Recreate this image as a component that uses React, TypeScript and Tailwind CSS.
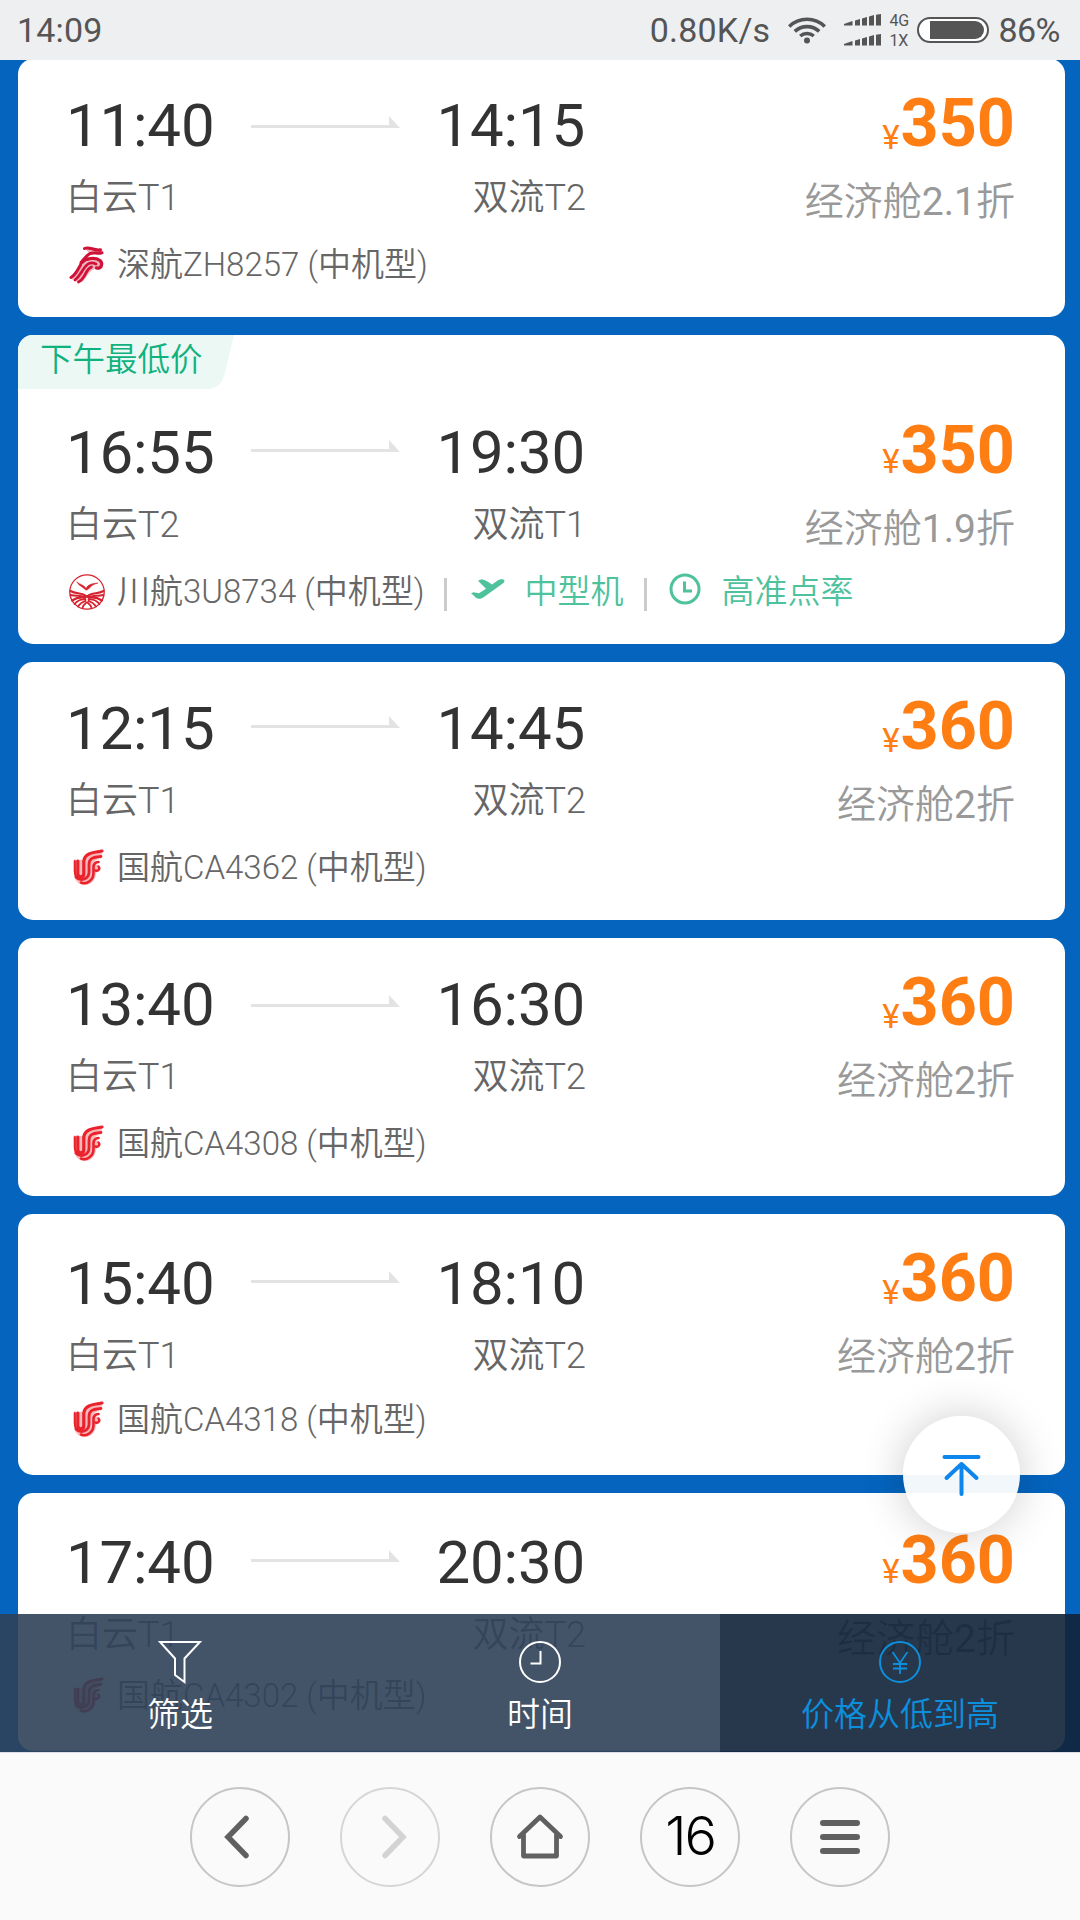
import React from 'react';

type Flight = {
  depart: string;
  arrive: string;
  from: string;
  to: string;
  airline: 'shenzhen' | 'sichuan' | 'airchina';
  flightNo: string;
  price: string;
  discount: string;
  tag?: string;
  features?: boolean;
  cardClass: string;
  timeClass: string;
  arrowClass: string;
  priceClass: string;
  infoClass: string;
};

const flights: Flight[] = [
  { depart: '11:40', arrive: '14:15', from: '白云T1', to: '双流T2', airline: 'shenzhen', flightNo: '深航ZH8257 (中机型)', price: '350', discount: '2.1', cardClass: 'h-[258px]', timeClass: 'mt-0', arrowClass: 'mt-[20px]', priceClass: 'mt-0', infoClass: 'mt-[28px]' },
  { depart: '16:55', arrive: '19:30', from: '白云T2', to: '双流T1', airline: 'sichuan', flightNo: '川航3U8734 (中机型)', price: '350', discount: '1.9', tag: '下午最低价', features: true, cardClass: 'h-[309px]', timeClass: 'mt-[3px]', arrowClass: 'mt-[20px]', priceClass: 'mt-[3px]', infoClass: 'mt-[31px]' },
  { depart: '12:15', arrive: '14:45', from: '白云T1', to: '双流T2', airline: 'airchina', flightNo: '国航CA4362 (中机型)', price: '360', discount: '2', cardClass: 'h-[258px]', timeClass: 'mt-0', arrowClass: 'mt-[17px]', priceClass: 'mt-0', infoClass: 'mt-[28px]' },
  { depart: '13:40', arrive: '16:30', from: '白云T1', to: '双流T2', airline: 'airchina', flightNo: '国航CA4308 (中机型)', price: '360', discount: '2', cardClass: 'h-[258px]', timeClass: 'mt-0', arrowClass: 'mt-[20px]', priceClass: 'mt-0', infoClass: 'mt-[28px]' },
  { depart: '15:40', arrive: '18:10', from: '白云T1', to: '双流T2', airline: 'airchina', flightNo: '国航CA4318 (中机型)', price: '360', discount: '2', cardClass: 'h-[261px]', timeClass: 'mt-[3px]', arrowClass: 'mt-[20px]', priceClass: 'mt-0', infoClass: 'mt-[28px]' },
  { depart: '17:40', arrive: '20:30', from: '白云T1', to: '双流T2', airline: 'airchina', flightNo: '国航CA4302 (中机型)', price: '360', discount: '2', cardClass: 'h-[258px]', timeClass: 'mt-[3px]', arrowClass: 'mt-[20px]', priceClass: 'mt-[3px]', infoClass: 'mt-[25px]' },
];

const SignalBars = () => <svg width="37" height="12" viewBox="0 0 37 12" fill="#555">
    <path d="M0 11.500V10l8.500-3v4.500zM11 6.500l5-1.500v6.500h-5zM18 4.500l5-1.500v8.500h-5zM25 2.500l5-1.500v10.500h-5zM32 .8l5-.8v11.500h-5z" />
  </svg>;

const StatusBar = () => <header className="relative z-10 flex h-[60px] shrink-0 items-center justify-between bg-[#edeff1] pr-[20px] pl-[17px] text-[34px] leading-[60px] text-[#555]">
    <span className="tracking-[0.2px]">14:09</span>
    <div className="flex items-center">
      <span className="tracking-[0.2px]">0.80K/s</span>
      <svg className="ml-[18px]" width="38" height="28" viewBox="0 0 38 28" fill="none" stroke="#555" strokeWidth="3.6">
        <path d="M1.200 10.500a25.500 25.500 0 0 1 35.600 0" />
        <path d="M6.800 15.400a18 18 0 0 1 24.400 0" />
        <path d="M12.200 20a10.500 10.500 0 0 1 13.600 0" />
        <circle cx="19" cy="24.500" r="3" fill="#555" stroke="none" />
      </svg>
      <div className="ml-[18px] flex flex-col gap-[8px]">
        <SignalBars />
        <SignalBars />
      </div>
      <div className="ml-[8px] flex w-[22px] flex-col pt-[2px] text-[16px] leading-[20px]">
        <span>4G</span>
        <span>1X</span>
      </div>
      <svg className="ml-[6px]" width="72" height="26" viewBox="0 0 72 26">
        <rect x="1" y="1" width="70" height="24" rx="12" fill="#fff" stroke="#555" strokeWidth="2" />
        <path d="M13 4h45a9 9 0 0 1 0 18H13z" fill="#555" />
      </svg>
      <span className="ml-[9px] tracking-[-0.500px]">86%</span>
    </div>
  </header>;

const AirlineLogo = ({ airline }: { airline: Flight['airline'] }) => {
  if (airline === 'shenzhen') {
    return <svg width="36" height="38" viewBox="0 0 36 38" fill="none" stroke="#cf1238" strokeLinecap="round" strokeLinejoin="round">
        <path d="M16 2.500c6-1.500 9 2.500 18 1.500-2 4-8 2-11 4-4 2-6 6-8 9 5-3 12-4 16-1 4 4 0 9-5 7-4 1-6 4-8 7s-4 6-8 7c-2-1-6-3-9-5 5-3 7-8 9-13 2-4 6-10 10-12z" fill="#f3b3be" stroke="none" />
        <path d="M15.500 2.500c5-2.500 9 2.500 16 1.200M33 6.800c-5 1.500-8-1-12 .7-4 2-6 6-8.500 8.500" strokeWidth="3" />
        <path d="M12 17c5-5 14-6 19-2.500 3.500 3.500 1 8.500-3.500 7.500" strokeWidth="3.200" />
        <path d="M27 18c-4-2-8-1-11 3-4 5-5 9-10 13" strokeWidth="2.800" />
        <path d="M22.500 21c-5 2-5 6-7.500 9.500-1.500 2.500-3 4.500-5.500 5.500" strokeWidth="2.800" />
        <path d="M11.500 19C9 23 7.500 28 2 31.500" strokeWidth="3" />
      </svg>;
  }
  if (airline === 'sichuan') {
    return <svg width="36" height="38" viewBox="0 0 36 38" fill="none" stroke="#d6232f" strokeLinecap="round">
        <circle cx="18" cy="19" r="17.200" strokeWidth="1.300" />
        <path d="M8 9c3 3 7 2.500 9 6.500 2-4.500 7-5 12-5.500-4.500 1-7 3-9.500 6-2.500 2-3.500.5-4.500-.5-2-2-5-2.500-7-6.500z" fill="#d6232f" strokeWidth=".6" />
        <path d="M1.500 18c6 3.500 11 1 16.500 5.500 5-4.500 10.500-2 16.500-5.500M1.700 22c6 1.500 11-.5 15.300 3-5.500-1.500-10 0-14 2.500M34.300 22c-6 1.500-11-.5-15.300 3 5.500-1.500 10 0 14 2.500" strokeWidth="2.100" />
        <path d="M16.500 26.500c-4.500-.5-8 1-11 4.500M19.500 26.500c4.500-.5 8 1 11 4.500M16.500 28c-3.500 1-6 3-7.500 5.500M19.500 28c3.500 1 6 3 7.500 5.500M17.500 29.500c-2 1.500-3.500 3-4 5.500M18.500 29.500c2 1.500 3.500 3 4 5.500" strokeWidth="1.800" />
      </svg>;
  }
  return <svg width="36" height="38" viewBox="0 0 36 38" fill="none" stroke="#e9222c" strokeLinecap="round">
      <path d="M33.500 1.500C22 2.500 15 5 14 11L5 10.500v17C7 33 11 36.500 17 36c6-.5 10-6 10-12l4-3-1-5-5-1 1-3 6-4z" fill="#f9b9bb" stroke="none" />
      <path d="M33 2C22 3.500 15.500 5 14.800 12v12.500c0 4.500-6 4.500-6 0V12" strokeWidth="3.200" />
      <path d="M32 7.500c-8 .8-12 1.500-12 8v7.500c0 7-8.500 10-13 5" strokeWidth="2.800" />
      <path d="M29.500 13c-3.500.2-5 2-5 5.500v5.500c0 7-6.500 12-12.500 9.500" strokeWidth="2.600" />
      <path d="M5.800 12v10c0 3 .5 4.500 2 6" strokeWidth="2.200" />
      <path d="M26.500 21.500c3 1 5-2 3-4" strokeWidth="2.400" />
    </svg>;
};

const Features = () => <div className="flex items-center text-[33px] font-[350] text-[#4ec29c]">
    <span className="mt-[4px] ml-[19px] h-[33px] w-[3px] bg-[#ccc]" />
    <svg className="ml-[24px] -mt-[7px]" width="34" height="20" viewBox="0 0 34 20" fill="#4ec29c">
      <path d="M0 14.500l2.500-1.200 5.500 1 7-4.500L7 1.800 10.500.3c4 1 7 2.500 10.500 5.200L27 1.200C29.500-.3 33.500-.2 33.500 1.800c0 1.200-1 2.200-2.500 3.200L13 18c-1.500 1-3.500 2-5.500 1.800C5 19.500 4 17 0 14.500z" />
    </svg>
    <span className="ml-[20px]">中型机</span>
    <span className="mt-[4px] ml-[20px] h-[33px] w-[3px] bg-[#ccc]" />
    <svg className="ml-[22px] -mt-[7px]" width="32" height="32" viewBox="0 0 32 32" fill="none" stroke="#4ec29c" strokeWidth="3">
      <circle cx="16" cy="16" r="14" />
      <path d="M15.500 8.500V18h7.500" />
    </svg>
    <span className="ml-[21px]">高准点率</span>
  </div>;

const FlightCard = ({ flight }: { flight: Flight }) => <article className={`shrink-0 overflow-hidden rounded-[15px] bg-white ${flight.cardClass}`}>
    {flight.tag && <div className="relative h-[48px]">
        <svg className="absolute top-0 left-0" width="216" height="54" viewBox="0 0 216 54">
          <path d="M0 0h216l-9 38c-3.500 11-8 16-18 16H0z" fill="#ebf8f4" />
        </svg>
        <span className="relative ml-[22px] block text-[32.500px] leading-[50px] font-[350] text-[#0fb27d]">{flight.tag}</span>
      </div>}
    <div className="flex justify-between pr-[50px] pl-[48px]">
      <div className="w-[520px] pt-[37px]">
        <div className="flex h-[63px] items-start justify-between pr-px text-[60px] leading-[60px] tracking-[-0.200px] text-[#333]">
          <span className={flight.timeClass}>{flight.depart}</span>
          <svg className={flight.arrowClass} width="149" height="12" viewBox="0 0 149 12" fill="#e3e3e3">
            <path d="M0 9h138V0l11 12H0z" />
          </svg>
          <span className={flight.timeClass}>{flight.arrive}</span>
        </div>
        <div className="mt-[21px] flex h-[39px] items-start justify-between text-[36px] leading-[36px] font-[350] text-[#666]">
          <span className={flight.timeClass}>{flight.from}</span>
          <span className={flight.timeClass}>{flight.to}</span>
        </div>
      </div>
      <div className="flex flex-col items-end pt-[31px]">
        <div className="flex h-[70px] items-start text-[#ff7e14]">
          <span className="mt-[31px] mr-px text-[33px] leading-[34px]">¥</span>
          <span className={`text-[66.500px] leading-[67px] font-bold ${flight.priceClass}`}>{flight.price}</span>
        </div>
        <div className="mt-[22px] h-[37px] text-[39px] leading-[40px] font-[350] text-[#999]">
          <p className={flight.priceClass}>经济舱<span className="font-normal">{flight.discount}</span>折</p>
        </div>
      </div>
    </div>
    <div className={`flex h-[36px] items-center pl-[51px] leading-[36px] ${flight.infoClass}`}>
      <AirlineLogo airline={flight.airline} />
      <span className="ml-[12px] text-[33px] font-[350] text-[#666]">{flight.flightNo}</span>
      {flight.features && <Features />}
    </div>
  </article>;

const BackToTop = () => <button className="absolute top-[1416px] left-[903px] flex h-[117px] w-[117px] items-center justify-center rounded-full bg-white/95 shadow-[0_0_45px_rgba(0,0,0,0.2)]">
    <svg width="39" height="46" viewBox="0.5 0 39 46" className="-ml-px" fill="none" stroke="#0d86ee" strokeWidth="4" strokeLinecap="round" strokeLinejoin="round">
      <path d="M3 5h34M20 12v30M5 26l15-14 15 14" />
    </svg>
  </button>;

const FilterBar = () => <div className="absolute top-[1614px] left-0 grid h-[138px] w-full grid-cols-3 text-[33px] leading-[36px] font-[350] text-white">
    <button className="flex flex-col items-center bg-[#2f4159]/90 pt-[26px]">
      <svg width="44" height="44" viewBox="0 0 44 44" fill="none" stroke="#fff" strokeWidth="2">
        <path d="M2 2h40L26.500 18.500V42L17 35V18.500z" />
      </svg>
      <span className="mt-[13px]">筛选</span>
    </button>
    <button className="flex flex-col items-center bg-[#2f4159]/90 pt-[26px]">
      <svg width="44" height="44" viewBox="0 0 44 44" fill="none" stroke="#fff" strokeWidth="2">
        <circle cx="22" cy="22" r="20" />
        <path d="M22.500 11v12.500H12.500" />
      </svg>
      <span className="mt-[13px]">时间</span>
    </button>
    <button className="flex flex-col items-center bg-[#112238]/90 pt-[26px] text-[#0c8fdc]">
      <svg width="44" height="44" viewBox="0 0 44 44" fill="none" stroke="#0c8fdc" strokeWidth="2">
        <circle cx="22" cy="22" r="20" />
        <path d="M14.500 12L22 23l7.500-11M22 23v11M15 24h14M15 28.500h14" strokeWidth="1.800" />
      </svg>
      <span className="mt-[13px]">价格从低到高</span>
    </button>
  </div>;

const navButton = 'flex h-[100px] w-[100px] items-center justify-center rounded-full border-2';

const BrowserBar = () => <nav className="relative z-10 flex h-[168px] shrink-0 items-center justify-center gap-[50px] border-t border-[#dcdfe6] bg-[#fafafa]">
    <button className={`${navButton} border-[#c6c6c6]`}>
      <svg width="28" height="48" viewBox="0 0 28 48" className="-ml-[6px]" fill="none" stroke="#606060" strokeWidth="5.500" strokeLinecap="round">
        <path d="M23 5.500L5 24l18 18.500" />
      </svg>
    </button>
    <button className={`${navButton} border-[#d6d6d6]`}>
      <svg width="28" height="48" viewBox="0 0 28 48" className="ml-[7px]" fill="none" stroke="#d3d3d3" strokeWidth="5.500" strokeLinecap="round">
        <path d="M5 5.500L23 24 5 42.500" />
      </svg>
    </button>
    <button className={`${navButton} border-[#c6c6c6]`}>
      <svg width="48" height="46" viewBox="0 0 48 46" className="-mt-[2px]" fill="none" stroke="#606060" strokeWidth="4.800" strokeLinecap="round" strokeLinejoin="round">
        <path d="M3.500 23.500L24 4l20.500 19.500M7.500 21.500V43h33V21.500" />
      </svg>
    </button>
    <button className={`${navButton} border-[#c6c6c6] font-[Inter] text-[54px] leading-[60px] font-light tracking-[-2px] text-black`}>
      <span className="-mt-[2px]">16</span>
    </button>
    <button className={`${navButton} border-[#c6c6c6]`}>
      <div className="flex w-[40px] flex-col gap-[8px]">
        <span className="h-[6px] rounded-full bg-[#606060]" />
        <span className="h-[6px] rounded-full bg-[#606060]" />
        <span className="h-[6px] rounded-full bg-[#606060]" />
      </div>
    </button>
  </nav>;

export default function App() {
  return <div className="relative flex h-[1920px] w-[1080px] flex-col overflow-hidden bg-[#0464be] font-[Roboto,'Noto_Sans_CJK_SC',sans-serif]">
      <StatusBar />
      <main className="-mt-px flex min-h-0 flex-1 flex-col gap-[18px] overflow-hidden pr-[15px] pl-[18px]">
        {flights.map(flight => <FlightCard key={flight.flightNo} flight={flight} />)}
      </main>
      <FilterBar />
      <BackToTop />
      <BrowserBar />
    </div>;
}
